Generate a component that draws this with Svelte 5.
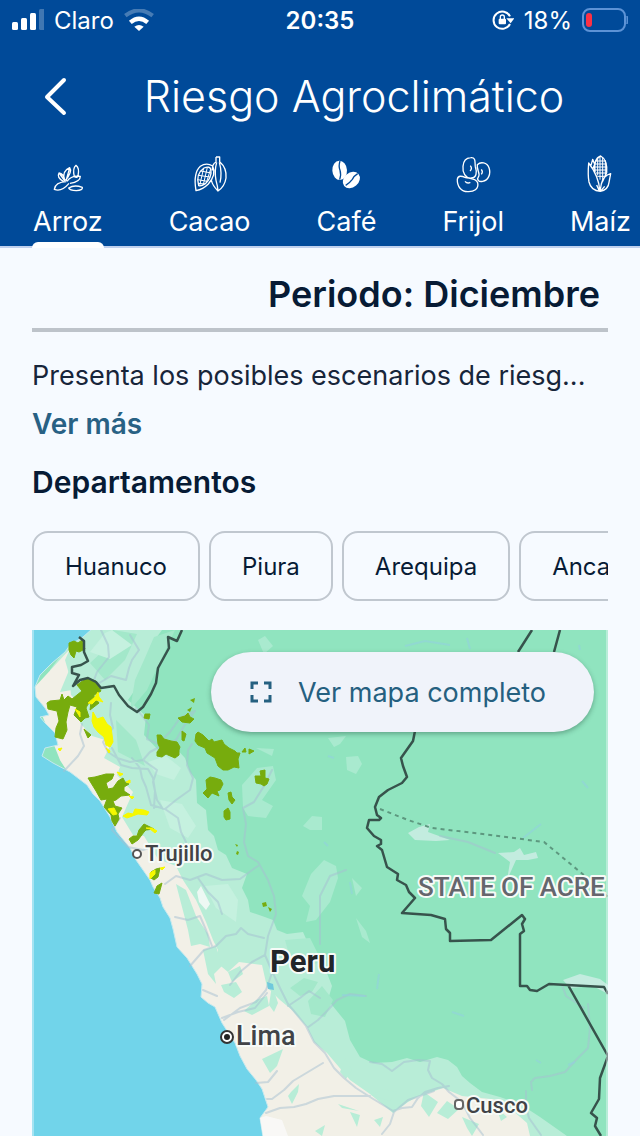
<script>
  let active = $state('Arroz');
  const crops = ['Arroz', 'Cacao', 'Café', 'Frijol', 'Maíz'];
  const departments = ['Huanuco', 'Piura', 'Arequipa', 'Ancash'];
</script>

<div class="page">
  <header>
    <div class="status">
      <div class="carrier">
        <svg width="32" height="22" viewBox="0 0 32 22" fill="#fff" aria-hidden="true">
          <rect y="13" width="6" height="8" rx="1.5" />
          <rect x="9" y="9" width="6" height="12" rx="1.5" />
          <rect x="18" y="4" width="6" height="17" rx="1.5" />
          <rect x="27" y="0" width="6" height="21" rx="1.5" opacity=".25" />
        </svg>
        <span>Claro</span>
        <svg width="30" height="22" viewBox="0 0 90 66" fill="none" stroke="#fff" aria-hidden="true">
          <path d="M4 20Q45-12 86 20" stroke-width="12" opacity=".28" />
          <path d="M19 40Q45 18 71 40" stroke-width="13" />
          <path d="M31 53Q45 43 59 53L45 66Z" fill="#fff" stroke="none" />
        </svg>
      </div>
      <strong>20:35</strong>
      <div class="power">
        <svg width="22" height="22" viewBox="0 0 66 66" fill="none" stroke="#fff" stroke-width="6" aria-hidden="true">
          <path d="M54 45A26 26 0 1 1 54 22" />
          <path d="M43 28H67L56 43Z" fill="#fff" stroke="none" />
          <rect x="20" y="29" width="22" height="17" rx="3" fill="#fff" stroke="none" />
          <path d="M25 30V24a6 6 0 0 1 12 0V30" stroke-width="4" />
        </svg>
        <span>18%</span>
        <svg width="46" height="24" viewBox="0 0 46 24" fill="none" aria-hidden="true">
          <rect x="1" y="1" width="42" height="22" rx="7" stroke="#5d93d6" stroke-width="2" />
          <rect x="4" y="5" width="6" height="14" rx="3" fill="#fb3145" />
          <path d="M45 8q2 4 0 8Z" fill="#5d93d6" stroke="#5d93d6" />
        </svg>
      </div>
    </div>

    <div class="bar">
      <button class="back" aria-label="Atrás">
        <svg width="24" height="40" viewBox="0 0 24 40" fill="none" stroke="#fff" stroke-width="4" stroke-linecap="round" stroke-linejoin="round"><path d="M20 4L3 21L20 37" /></svg>
      </button>
      <h1>Riesgo Agroclimático</h1>
    </div>

    <nav class="tabs">
      {#each crops as crop}
        <button class:active={active === crop} onclick={() => (active = crop)}>
          {#if crop === 'Arroz'}
            <svg class="crop" viewBox="141 45 120 120" aria-hidden="true">
              <path d="M188 125Q166 112 174 99Q188 101 191 120M190 120Q183 93 206 83Q215 94 193 122M220 110Q214 85 225 76Q236 83 231 108Q228 115 220 110M198 124Q211 105 238 109Q238 126 207 130M196 125Q163 126 160 148Q181 157 204 130M203 144Q220 133 244 142Q246 151 226 152Q206 151 203 144ZM174 99L192 123M206 84L195 123M222 108L230 111" />
            </svg>
          {:else if crop === 'Cacao'}
            <svg class="crop" viewBox="565 45 120 120" aria-hidden="true">
              <path d="M643 51H654V65Q676 84 673 114Q669 140 649 153Q632 136 629 120M643 51V66Q630 73 633 91M645 67Q638 92 643 121Q648 139 649 152M653 67Q662 99 655 128M583 152Q574 99 596 79Q614 66 633 78Q645 103 620 132Q604 148 583 152ZM591 137Q581 102 607 84Q625 77 628 89Q630 115 611 131Q598 140 591 137Z" />
              <path d="M606 84L594 137M617 82L605 134M627 87L615 125M597 93L629 99M590 106L625 111M588 119L617 124M590 130L609 132" />
            </svg>
          {:else if crop === 'Café'}
            <svg class="crop" viewBox="15 45 120 120" aria-hidden="true">
              <ellipse cx="56" cy="91" rx="22" ry="29" transform="rotate(-3 56 91)" fill="#fff" stroke="none" />
              <ellipse cx="91" cy="120" rx="28" ry="22" transform="rotate(-40 91 120)" fill="#fff" stroke="none" />
              <path d="M57 63Q52 79 57 91Q61 103 56 119M110 101Q100 107 94 118Q85 130 74 136" stroke="#004a99" />
            </svg>
          {:else if crop === 'Frijol'}
            <svg class="crop" viewBox="396 45 120 120" aria-hidden="true">
              <path d="M449 53C466 51 461 69 463 80C469 97 466 114 451 114C433 116 424 97 426 79C427 65 434 54 449 53ZM469 74C479 64 498 67 504 83C511 103 501 121 485 124C472 127 467 117 472 111C480 102 466 90 469 74ZM409 118C411 105 422 108 434 113C448 116 465 115 470 128C474 148 458 156 440 155C421 155 408 140 409 118ZM448 77Q455 86 447 93M481 88Q487 95 481 103M432 124Q439 132 448 127" />
            </svg>
          {:else}
            <svg class="crop" viewBox="774 45 120 120" aria-hidden="true">
              <path d="M819 96Q814 56 836 48Q857 59 854 98L841 126M800 69Q797 106 801 126Q807 152 835 154Q859 149 861 127L866 101Q844 107 838 132L834 154Q830 107 800 69ZM807 76L812 58L818 73L813 86M824 135L832 153M848 139L835 154" />
              <path d="M827 54V106M834 49V119M842 53V122M850 61V108M820 63H851M818 72H854M817 81H855M818 90H855M821 99H854M826 109H848" />
            </svg>
          {/if}
          <span>{crop}</span>
        </button>
      {/each}
    </nav>
  </header>

  <main>
    <h2>Periodo: Diciembre</h2>
    <p>Presenta los posibles escenarios de riesg...</p>
    <button class="more">Ver más</button>
    <h3>Departamentos</h3>
    <div class="chips">
      {#each departments as name}
        <button>{name}</button>
      {/each}
    </div>

    <section class="map">
      <svg class="terrain" viewBox="32 630 576 506" preserveAspectRatio="xMidYMin slice" role="img" aria-label="Mapa de Peru">
        <rect x="32" y="630" width="576" height="506" fill="#90e4bf" />
        <path fill="#b8edd7" d="M80 630H162L151 645L142 680L128 700L146 716L144 735L160 752L172 744L185 758L190 772L196 780L197 803L206 810L208 830L214 836L218 850L226 855L232 868L247 874L242 888L248 900L250 912L262 916L273 920L277 930L287 934L303 932L311 950L325 968L332 986L328 1000L345 1021L350 1040L360 1057L373 1063L392 1062L407 1058L420 1062L437 1057L448 1060L457 1067L462 1076L470 1083L482 1092L500 1097L520 1104L540 1117L567 1136H240L150 900L60 760L50 670Z" />
        <path fill="#a3e8ca" d="M113 630L137 634L125 660L105 680L90 663L104 650ZM144 660L154 637L175 630L160 662L147 690L130 710L135 680ZM116 720L136 740L145 766L118 752ZM308 1001L322 986L333 1000L325 1017L311 1014ZM290 988L304 978L318 982L312 992L300 996ZM244 1000L262 990L258 1000L248 1010Z" />
        <path fill="#c5f1df" d="M105 633L112 630L132 645L110 659L90 652ZM148 762L166 756L181 768L174 780L156 774ZM160 800L182 804L196 826L188 838L170 828ZM205 886L228 884L238 900L236 922L216 908Z" />
        <path fill="#a9eacf" d="M242 785L257 768L273 766L276 780L262 800L273 806L266 818L248 816L243 808ZM256 748L274 749L272 756ZM346 757L358 756L362 764L356 774L347 770ZM328 738L346 736L340 744L334 747ZM303 826L312 816L322 817L322 830L310 830ZM258 640L265 636L273 646L264 654ZM311 874L324 860L336 866L338 878L330 902L316 920L306 922L310 906L302 896ZM352 878L362 888L356 896ZM356 918L366 931L370 943L362 937ZM285 940L310 938L322 962L306 966L290 958Z" />
        <path fill="#c3ecdf" d="M408 833L419 827L430 824L428 832L450 840L436 841L415 840ZM498 853L514 852L520 848L524 855L536 852L538 858L528 860L516 860L507 880L510 862ZM563 980L580 974L600 979L608 985V994L593 986L570 988Z" />
        <path fill="#f2f0e7" d="M32 690L70 649L65 660L69 674L71 695L82 706L80 723L92 736L112 742L104 758L120 767L117 775L133 792L122 817L133 835L144 836L158 859L176 866L183 880L196 900L206 922L213 940L218 950L216 962L228 972L239 962L262 965L267 987L280 1000L292 1010L307 1027L314 1042L327 1053L350 1080L370 1094L393 1113L408 1102L417 1097L443 1088L462 1096L500 1100L512 1110L527 1123L530 1136H240L150 900L60 760Z" />
        <path fill="#b8edd7" d="M176 884L186 890L196 916L208 934L210 947L200 944L191 946L188 930ZM203 950L216 946L222 966L214 974L216 984L208 974ZM228 972L240 966L243 974L232 982ZM221 985L236 982L242 992L234 998L224 992ZM244 1011L256 1000L267 996L269 1006L252 1015ZM272 985L278 1003L274 1012L269 1005ZM262 1059L283 1049L277 1066L270 1073ZM291 1092L299 1084L298 1092L292 1104L288 1096ZM338 1104L359 1111L342 1108ZM345 1058L352 1070L346 1079L340 1072ZM315 1131L325 1125L322 1136ZM350 1112L360 1115L357 1127ZM371 1095L384 1089L397 1092L390 1101ZM374 1120L383 1117L380 1127ZM424 1092L438 1102L429 1117L421 1106ZM437 1113L447 1101L459 1109L448 1119ZM462 1117L479 1124L472 1136L467 1128ZM496 1107L507 1117L501 1121ZM78 700L94 703L94 716L82 713ZM70 668L80 676L72 690L60 692Z" />
        <path fill="#71d4ea" stroke="#c5e9ef" stroke-width="1" stroke-linejoin="round" d="M31 629H92L83 637L70 645L65 652L52 663L40 675L35 687L36 697L45 708L49 715L40 717L45 723L55 733L58 745L45 748L42 756L53 763L70 772L87 785L93 794L100 801L110 817L117 832L130 848L136 860L143 870L150 880L153 887L160 898L163 907L170 918L173 929L177 947L187 958L197 974L202 984L201 997L208 1003L215 1007L222 1023L235 1043L240 1056L247 1069L256 1080L262 1089L268 1107L260 1118L263 1137H31Z" />
        <path fill="#fafafa" opacity=".8" d="M260 1118L266 1116L282 1120L288 1136H263ZM197 892L201 886L206 896L210 904L206 910L199 902Z" />

        <g fill="none" stroke="#a6c0d2" stroke-width="2" opacity=".5" stroke-linejoin="round" stroke-linecap="round">
          <path d="M101 630L108 645L109 657L97 672L91 688L111 676L126 680L129 668L132 660L139 650L130 635M111 703L110 715L113 728L103 742L108 752L117 758L130 762L143 760L157 770L153 782L157 800L163 809M143 760L150 752L165 744L176 740L184 726L195 711L180 718L170 732L158 744L147 739L149 725L136 708M132 758L140 768L142 778L146 787L151 805L165 809L178 818L181 832L186 842M165 809L176 800L190 790L193 778L187 765L188 750L192 744M82 724L80 734L84 746L78 756L64 771M112 748L121 765L132 768L148 769L153 778L155 791L154 808M120 818L112 830L128 847L143 850L158 845" />
          <path d="M165 884L176 876L190 880L206 874L222 880L240 879L255 868L258 866M198 878L208 892L218 902L222 914M258 862L268 880L274 896L276 914L268 936L265 955L252 962L240 972L230 985M272 770L264 786L254 802L243 808L246 824L244 842L248 856L258 862M175 917L188 920L200 916L206 930L212 946M190 966L204 950L216 946L226 936L236 934L241 928L248 934L264 938M265 955L271 969L280 988L288 1004L298 1016L306 1026L314 1042L325 1053L334 1068L344 1078L356 1088L370 1097L393 1111L402 1108L412 1107L418 1098L425 1092L438 1088L449 1086M224 1020L240 1008L256 1002L266 990L273 970M217 996L203 990M222 1018L238 1012L255 1008L267 993M288 1006L300 998L309 991L320 998M320 944V896L330 876L346 870M307 1028L318 1020L328 1010L337 1000L350 994L366 996M323 1063L308 1072L293 1081L284 1090L272 1099L267 1099M266 1113L280 1108L294 1107L306 1104L318 1099L334 1096L350 1096L370 1096M256 1083L268 1082L277 1071M370 1062L382 1064L392 1071L404 1062L418 1060L430 1061L428 1070L432 1078L442 1084L449 1092L462 1102L470 1118L483 1135M382 1134L390 1124L394 1112L408 1100L420 1096L434 1091M532 1090L531 1082L535 1078L550 1076L565 1072L576 1060L588 1048L590 1028L588 1004M526 1091L526 1106L529 1118L541 1135M562 985L566 996L575 1002L584 1008" />
          <path d="M440 836L468 842L495 853" />
        </g>
        <path fill="none" stroke="#92cfe0" stroke-width="2" opacity=".55" d="M405 646L425 641L450 645M467 638L470 649M579 645L580 650M582 781L588 788M328 756L334 758M324 842L328 846M350 882L352 894M379 974L377 989M536 1060L541 1063M523 838L541 824M342 995L365 996M452 1012L464 1016M568 1065L575 1062" />
        <path fill="#70c9dc" d="M267 982L273 984L274 990L268 989Z" />

        <g stroke-width="1" stroke-linejoin="round">
          <path fill="#77ac0d" stroke="#77ac0d" d="M69 643L74 641L78 643L82 640L85 649L79 652L76 651L74 658L71 655L69 650ZM77 685L81 682L87 678L96 681L98 686L101 691L94 695L93 702L88 704L86 708L89 717L85 718L81 722L74 715L77 707L70 705L68 712L66 722L67 730L63 739L55 737L56 728L59 721L57 711L48 709L47 703L50 701L60 700L62 694L64 700L68 696L72 699L82 691ZM84 729L91 735L88 738ZM92 694L99 703L90 710ZM145 714L150 714L149 719L144 718ZM157 735L161 735L164 739L171 741L177 742L180 747L179 750L179 755L175 758L168 755L166 754L162 757L157 756L157 752L160 748L158 744ZM178 718L185 716L188 713L190 717L194 719L190 723L182 722ZM182 731L186 734L184 741L182 740ZM196 734L198 732L203 735L209 741L212 739L214 742L222 740L224 744L229 748L235 751L237 753L240 753L238 759L239 768L234 767L228 770L223 770L218 766L215 758L207 753L205 748L198 745L195 741ZM242 752L245 748L246 752ZM249 749L254 751L249 754ZM255 776L261 776L260 771L265 770L265 778L269 779L267 784L264 786L261 784L256 783ZM206 780L210 777L215 778L221 780L223 784L220 790L217 791L219 796L212 793L208 798L203 793L207 789ZM228 793L231 792L232 797L235 800L232 804L229 800ZM224 811L228 808L230 812L230 819L226 820L224 817ZM88 778L95 777L106 774L114 774L112 779L106 783L108 789L113 788L118 781L123 778L125 782L129 784L124 787L124 791L130 795L121 796L116 800L113 801L115 806L122 808L118 814L119 819L115 826L112 821L111 815L104 807L107 799L101 800L96 791ZM129 839L133 836L137 836L139 830L144 824L150 827L154 829L146 830L144 832L138 840L132 844ZM151 872L156 869L160 868L158 877L154 880L151 878ZM155 891L157 886L162 883L159 894L154 893Z" />
          <path fill="#77ac0d" d="M262 903L266 902L267 906L263 907ZM268 907L272 909L270 912ZM235 844L238 845L237 847ZM237 851L239 852L238 855L236 854ZM190 700L195 698L194 703ZM187 710L192 707L190 712Z" />
          <path fill="#f6f800" stroke="#f6f800" d="M88 703L95 697L98 692L99 697L103 702L96 700L92 704ZM93 712L97 719L103 717L107 724L111 727L113 742L110 747L106 745L104 737L98 732L94 727L92 721ZM75 709L80 712L80 717ZM106 748L110 751L109 753ZM117 772L123 774L120 776ZM126 782L130 780L130 783ZM129 796L134 797L132 799ZM108 809L114 808L117 814L113 815ZM123 816L128 813L133 814L135 809L144 810L149 812L147 815L138 814L127 818ZM146 828L152 828L157 831L155 833L150 829ZM150 873L155 870L155 874L150 879ZM160 868L165 867L162 870ZM58 749L62 748L60 751Z" />
        </g>

        <g fill="none" stroke="#37534c" stroke-width="2.5" stroke-linejoin="round">
          <path d="M79 637L84 641L84 652L88 661L81 665L72 667L72 673L79 675L73 686L80 680L88 678L96 682L101 688L114 686L119 695L128 706L137 712L143 707L151 694L156 683L158 668L169 648L168 637L177 641L182 630" />
          <path d="M532 630L518 652M560 630L554 652M415 731L413 741L401 758L403 766L407 777L402 783L388 790L379 797L375 807L377 815L381 818L379 820L369 820L367 828L374 836L381 840L381 844L377 846L382 850L387 867L398 874L397 880L406 885L409 892L415 898L402 913L431 915L445 919L446 929L450 933L450 941L491 940L522 915L525 919L522 924L524 931L520 934V986L527 986L530 990L537 991L549 984L604 987L608 994M568 985L608 1056L600 1078L599 1099L591 1113L597 1118L595 1126L601 1136" />
        </g>
        <path d="M380 809L408 820L432 828L483 834L544 842L585 876L608 897" fill="none" stroke="#5d987f" stroke-width="2" stroke-dasharray="4 4" />

        <g class="names">
          <circle cx="137" cy="854" r="4" fill="#fff" stroke="#555" stroke-width="2" />
          <circle cx="227" cy="1037" r="6" fill="#fff" stroke="#333" stroke-width="2" />
          <circle cx="227" cy="1037" r="3" fill="#222" />
          <rect x="455" y="1100" width="8" height="9" rx="3" fill="#fff" stroke="#666" stroke-width="2" />
          <text x="145" y="861" font-size="22">Trujillo</text>
          <text class="country" x="270" y="972" font-size="31">Peru</text>
          <text x="236" y="1045" font-size="27">Lima</text>
          <text x="466" y="1113" font-size="22">Cusco</text>
          <text class="state" x="418" y="896" font-size="26">STATE OF ACRE</text>
        </g>
      </svg>
      <button class="full">
        <svg width="22" height="22" viewBox="0 0 22 22" fill="none" stroke="#256080" stroke-width="3" aria-hidden="true"><path d="M2 8V2H8M14 2H20V8M20 14V20H14M8 20H2V14" /></svg>
        <span>Ver mapa completo</span>
      </button>
    </section>
  </main>
</div>

<style>
  :global(body) { margin: 0; background: #f6faff; }
  .page {
    min-height: 100vh;
    display: flex;
    flex-direction: column;
    overflow: hidden;
    background: #f6faff;
    color: #071b35;
    font-family: Inter, "Liberation Sans", sans-serif;
  }
  button {
    border: 0;
    padding: 0;
    background: none;
    color: inherit;
    font: inherit;
    cursor: pointer;
  }
  svg { display: block; flex: none; }
  header {
    background: #004a99;
    color: #fff;
    border-bottom: 2px solid #bfd0ee;
  }
  .status {
    display: grid;
    grid-template-columns: 1fr auto 1fr;
    align-items: center;
    height: 40px;
    padding: 0 12px;
    font-size: 24px;
  }
  .status strong { font-weight: 600; }
  .carrier, .power { display: flex; align-items: center; gap: 10px; }
  .power { justify-content: flex-end; }
  .bar {
    display: flex;
    align-items: center;
    height: 112px;
    padding: 0 32px;
  }
  .back {
    display: grid;
    place-items: center;
    width: 48px;
    height: 64px;
  }
  h1 {
    flex: 1;
    margin: 0;
    padding-left: 20px;
    text-align: center;
    font-size: 43px;
    font-weight: 300;
    line-height: 52px;
    white-space: nowrap;
  }
  .tabs { display: flex; }
  .tabs button {
    position: relative;
    display: flex;
    flex: none;
    flex-direction: column;
    align-items: center;
    gap: 9px;
    height: 94px;
    padding: 3px 33px 0;
    font-size: 27px;
    line-height: 36px;
  }
  .active::after {
    content: "";
    position: absolute;
    left: 32px;
    right: 32px;
    bottom: -2px;
    height: 6px;
    border-radius: 6px 6px 0 0;
    background: #fff;
  }
  .crop {
    width: 40px;
    height: 40px;
    fill: none;
    stroke: #fff;
    stroke-width: 4;
    stroke-linejoin: round;
  }
  .crop path:nth-of-type(2) { stroke-width: 3; }
  main {
    flex: 1;
    display: flex;
    flex-direction: column;
    align-items: stretch;
    padding: 24px 32px 0;
  }
  h2, h3, p { margin: 0; white-space: nowrap; }
  h2 {
    padding: 0 8px 12px 0;
    border-bottom: 4px solid #bdc3ca;
    text-align: right;
    font-size: 36px;
    font-weight: 600;
    line-height: 44px;
  }
  p {
    margin-top: 26px;
    font-size: 27px;
    line-height: 36px;
    color: #17253a;
  }
  .more {
    align-self: flex-start;
    margin-top: 12px;
    font-size: 28px;
    font-weight: 600;
    line-height: 36px;
    color: #286184;
  }
  h3 {
    margin-top: 20px;
    font-size: 30px;
    font-weight: 600;
    line-height: 40px;
  }
  .chips {
    display: flex;
    gap: 9px;
    margin: 29px 0;
    overflow: hidden;
  }
  .chips button {
    flex: none;
    height: 70px;
    padding: 0 31px;
    border: 2px solid #c0c7cf;
    border-radius: 16px;
    font-size: 24px;
  }
  .map {
    position: relative;
    flex: 1;
    min-height: 320px;
    overflow: hidden;
  }
  .map::after {
    content: "";
    position: absolute;
    inset: 0;
    border: solid #f6faff66;
    border-width: 0 2px;
    pointer-events: none;
  }
  .terrain {
    position: absolute;
    inset: 0;
    width: 100%;
    height: 100%;
  }
  .names text {
    font-family: Roboto, sans-serif;
    font-weight: 500;
    fill: #414347;
    stroke: #f7fbf8;
    stroke-width: 4px;
    stroke-linejoin: round;
    paint-order: stroke;
  }
  .names .country { font-weight: 700; fill: #222529; }
  .names .state { fill: #65666d; }
  .full {
    position: absolute;
    top: 22px;
    right: 14px;
    display: flex;
    align-items: center;
    gap: 26px;
    height: 80px;
    padding: 0 48px 0 39px;
    border-radius: 40px;
    background: #f0f3fa;
    box-shadow: 0 2px 5px #1c483766;
    color: #256080;
    font-size: 27px;
  }
</style>
